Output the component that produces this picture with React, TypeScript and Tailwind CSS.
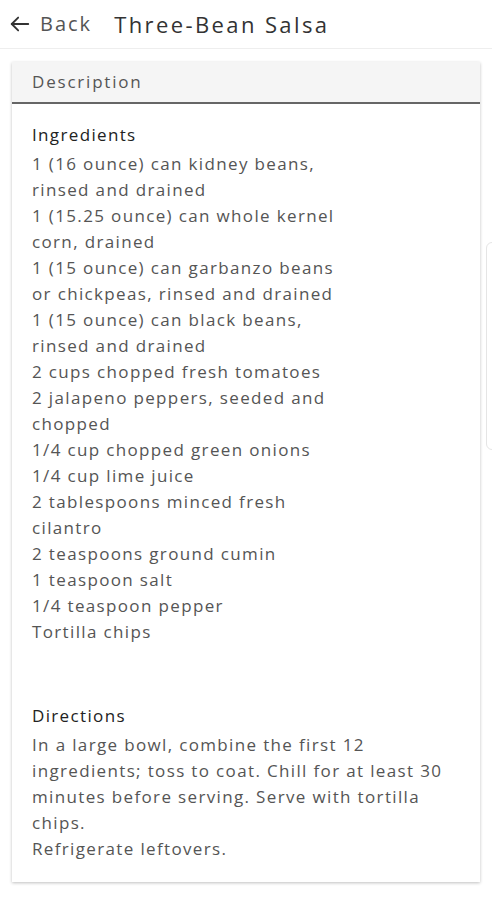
import React from "react";

const ingredients = [
  "1 (16 ounce) can kidney beans,",
  "rinsed and drained",
  "1 (15.25 ounce) can whole kernel",
  "corn, drained",
  "1 (15 ounce) can garbanzo beans",
  "or chickpeas, rinsed and drained",
  "1 (15 ounce) can black beans,",
  "rinsed and drained",
  "2 cups chopped fresh tomatoes",
  "2 jalapeno peppers, seeded and",
  "chopped",
  "1/4 cup chopped green onions",
  "1/4 cup lime juice",
  "2 tablespoons minced fresh",
  "cilantro",
  "2 teaspoons ground cumin",
  "1 teaspoon salt",
  "1/4 teaspoon pepper",
  "Tortilla chips",
];

const directions = [
  "In a large bowl, combine the first 12",
  "ingredients; toss to coat. Chill for at least 30",
  "minutes before serving. Serve with tortilla",
  "chips.",
  "Refrigerate leftovers.",
];

export default function App() {
  return (
    <div
      className="relative w-[492px] h-[900px] bg-white overflow-hidden"
      style={{ fontFamily: '"Open Sans", "Noto Sans", sans-serif' }}
    >
      <header className="h-[49px] flex items-center border-b border-[#eeeeee]">
        <div className="flex items-center pl-[9px]">
          <svg width="22" height="22" viewBox="0 0 24 24" fill="none" stroke="#333" strokeWidth="2" strokeLinecap="round" strokeLinejoin="round">
            <path d="M21 12H3" />
            <path d="M10 5l-7 7 7 7" />
          </svg>
          <span className="ml-[9px] text-[20px] text-[#555] tracking-[2px]">Back</span>
        </div>
        <h1 className="ml-[22px] text-[22px] text-[#333] tracking-[2.4px]">Three-Bean Salsa</h1>
      </header>

      <div className="mx-[12px] mt-[13px] shadow-[0_1px_3px_rgba(0,0,0,0.25)] bg-white">
        <div className="h-[42px] bg-[#f5f5f5] border-b-2 border-[#666] flex items-center pl-[20px]">
          <span className="text-[17px] text-[#555] tracking-[1.8px]">Description</span>
        </div>
        <div className="px-[20px] pt-[18px] pb-[20px] text-[17px] leading-[26px] text-[#555] tracking-[1.35px]">
          <div className="text-[#222] mb-[3px]">Ingredients</div>
          {ingredients.map((l, i) => (
            <div key={i} className="whitespace-nowrap">{l}</div>
          ))}
          <div className="mt-[58px] mb-[3px] text-[#222]">Directions</div>
          {directions.map((l, i) => (
            <div key={i} className="whitespace-nowrap">{l}</div>
          ))}
        </div>
      </div>

      <div className="absolute left-[486px] top-[242px] w-[12px] h-[208px] rounded-[6px] border border-[#e5e5e5]" />
    </div>
  );
}
